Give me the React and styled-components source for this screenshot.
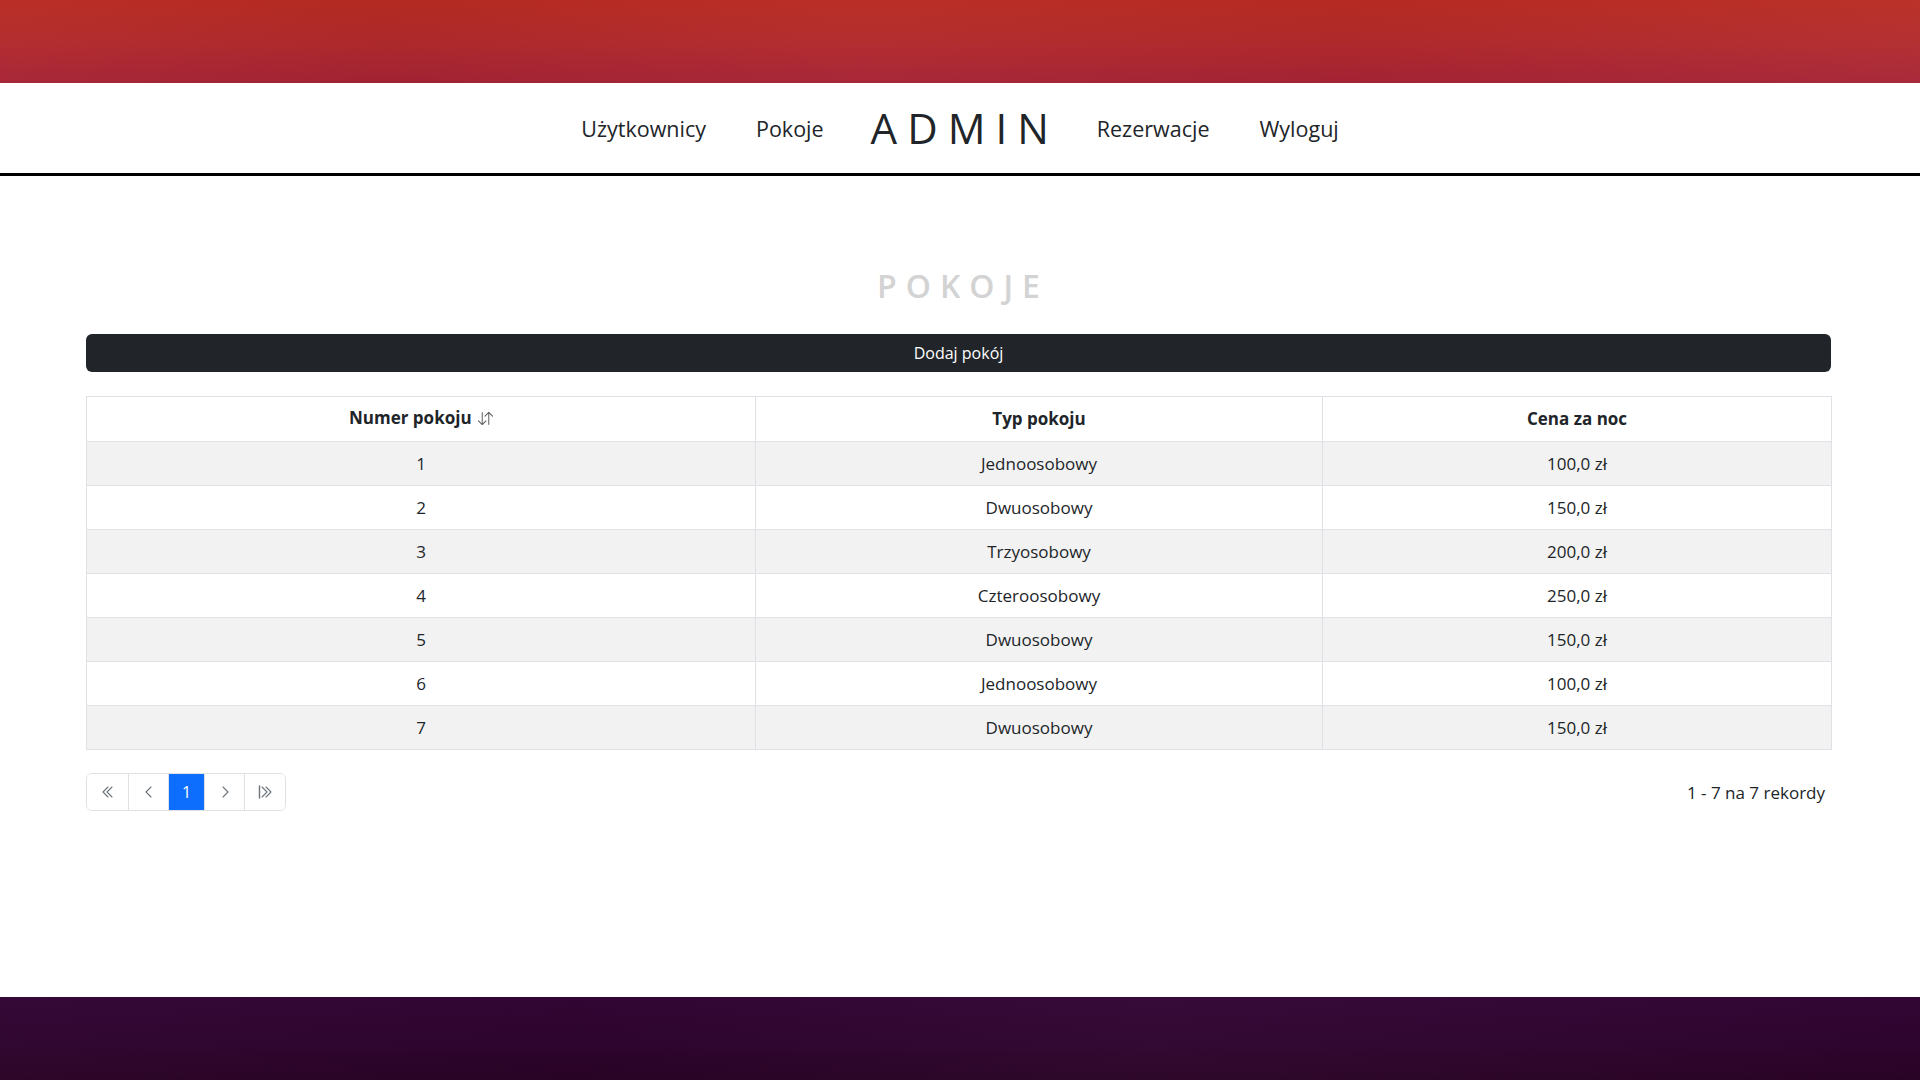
import styled, { createGlobalStyle } from "styled-components";

const GlobalStyle = createGlobalStyle`
    * { box-sizing: border-box; }
    html, body {
        margin: 0;
        padding: 0;
        font-family: "Open Sans", "Noto Sans", sans-serif;
        color: #212529;
        background: #fff;
    }
`;

const rooms = [
    { nr: 1, type: "Jednoosobowy", price: "100,0 zł" },
    { nr: 2, type: "Dwuosobowy", price: "150,0 zł" },
    { nr: 3, type: "Trzyosobowy", price: "200,0 zł" },
    { nr: 4, type: "Czteroosobowy", price: "250,0 zł" },
    { nr: 5, type: "Dwuosobowy", price: "150,0 zł" },
    { nr: 6, type: "Jednoosobowy", price: "100,0 zł" },
    { nr: 7, type: "Dwuosobowy", price: "150,0 zł" },
];

const SortIcon = () => (
    <svg width="15" height="15" viewBox="0 0 16 16" fill="#555">
        <path d="M11.5 15a.5.5 0 0 0 .5-.5V2.707l3.146 3.147a.5.5 0 0 0 .708-.708l-4-4a.5.5 0 0 0-.708 0l-4 4a.5.5 0 1 0 .708.708L11 2.707V14.5a.5.5 0 0 0 .5.5m-7-14a.5.5 0 0 1 .5.5v11.793l3.146-3.147a.5.5 0 0 1 .708.708l-4 4a.5.5 0 0 1-.708 0l-4-4a.5.5 0 0 1 .708-.708L4 13.293V1.5a.5.5 0 0 1 .5-.5" />
    </svg>
);

const PageIcon = ({ kind }) => (
    <svg width="16" height="16" viewBox="0 0 16 16" fill="none" stroke="#6c757d" strokeWidth="1.1" strokeLinecap="round" strokeLinejoin="round">
        {kind === "first" && (
            <>
                <path d="M8 3 3 8l5 5" />
                <path d="M12 3 7 8l5 5" />
            </>
        )}
        {kind === "prev" && <path d="M10 3 5 8l5 5" />}
        {kind === "next" && <path d="M6 3l5 5-5 5" />}
        {kind === "last" && (
            <>
                <path d="M2.5 2v12" strokeWidth="1.4" />
                <path d="M5 3l5 5-5 5" />
                <path d="M9 3l5 5-5 5" />
            </>
        )}
    </svg>
);

const App = () => {
    return (
        <Page>
            <GlobalStyle />
            <TopBand />
            <Nav>
                <NavLink>Użytkownicy</NavLink>
                <NavLink>Pokoje</NavLink>
                <Brand>ADMIN</Brand>
                <NavLink>Rezerwacje</NavLink>
                <NavLink>Wyloguj</NavLink>
            </Nav>

            <Main>
                <Title>POKOJE</Title>
                <AddButton>Dodaj pokój</AddButton>

                <Table>
                    <colgroup>
                        <col style={{ width: 669 }} />
                        <col style={{ width: 567 }} />
                        <col style={{ width: 509 }} />
                    </colgroup>
                    <thead>
                        <tr>
                            <Th>
                                Numer pokoju <SortWrap><SortIcon /></SortWrap>
                            </Th>
                            <Th>Typ pokoju</Th>
                            <Th>Cena za noc</Th>
                        </tr>
                    </thead>
                    <tbody>
                        {rooms.map((r, i) => (
                            <Row key={r.nr} $striped={i % 2 === 0}>
                                <Td>{r.nr}</Td>
                                <Td>{r.type}</Td>
                                <Td>{r.price}</Td>
                            </Row>
                        ))}
                    </tbody>
                </Table>

                <Footerbar>
                    <Pagination>
                        <PageItem $w={41}><PageIcon kind="first" /></PageItem>
                        <PageItem $w={40}><PageIcon kind="prev" /></PageItem>
                        <PageItem $w={36} $active>1</PageItem>
                        <PageItem $w={40}><PageIcon kind="next" /></PageItem>
                        <PageItem $w={41}><PageIcon kind="last" /></PageItem>
                    </Pagination>
                    <Records>1 - 7 na 7 rekordy</Records>
                </Footerbar>
            </Main>

            <BottomBand />
        </Page>
    );
};

export default App;

const Page = styled.div`
    min-height: 100vh;
    display: flex;
    flex-direction: column;
`;

const TopBand = styled.div`
    height: 83px;
    background:
        linear-gradient(90deg, rgba(255,255,255,0.02) 0%, rgba(0,0,0,0.03) 20%, rgba(255,255,255,0.02) 45%, rgba(0,0,0,0.02) 70%, rgba(255,255,255,0.03) 100%),
        linear-gradient(180deg, #b92b22 0%, #b22a2c 50%, #a62336 100%);
`;

const Nav = styled.nav`
    height: 93px;
    border-bottom: 3px solid #000;
    display: flex;
    justify-content: center;
    align-items: center;
`;

const NavLink = styled.a`
    padding: 0 25px;
    font-size: 21.5px;
    font-weight: 500;
    color: #212529;
    cursor: pointer;
`;

const Brand = styled.span`
    padding: 0 13px 0 22px;
    font-size: 42px;
    font-weight: 500;
    letter-spacing: 10px;
    color: #212529;
    line-height: 1;
`;

const Main = styled.main`
    flex: 1;
    padding: 90px 89px 0 86px;
`;

const Title = styled.h2`
    margin: 0 0 28px 0;
    height: 40px;
    line-height: 40px;
    text-align: center;
    font-size: 32px;
    font-weight: 600;
    letter-spacing: 9px;
    padding-left: 9px;
    color: #d3d3d3;
`;

const AddButton = styled.button`
    display: block;
    width: 100%;
    height: 38px;
    border: none;
    border-radius: 6px;
    background: #212529;
    color: #fff;
    font-family: "Open Sans", "Noto Sans", sans-serif;
    font-size: 16px;
    cursor: pointer;
`;

const Table = styled.table`
    width: 100%;
    margin-top: 24px;
    border-collapse: collapse;
    table-layout: fixed;
    font-size: 17px;
`;

const Th = styled.th`
    border: 1px solid #dee2e6;
    padding: 8px;
    line-height: 26px;
    font-weight: 700;
    text-align: center;
    color: #212529;
`;

const SortWrap = styled.span`
    display: inline-block;
    vertical-align: -2px;
    margin-left: 2px;
`;

const Row = styled.tr`
    background: ${(p) => (p.$striped ? "#f2f2f2" : "#fff")};
`;

const Td = styled.td`
    border: 1px solid #dee2e6;
    padding: 8px;
    line-height: 27px;
    text-align: center;
    color: #212529;
`;

const Footerbar = styled.div`
    margin-top: 23px;
    display: flex;
    justify-content: space-between;
    align-items: center;
`;

const Pagination = styled.div`
    display: flex;
    border: 1px solid #dee2e6;
    border-radius: 6px;
    overflow: hidden;
`;

const PageItem = styled.div`
    width: ${(p) => p.$w}px;
    height: 36px;
    display: flex;
    align-items: center;
    justify-content: center;
    font-size: 16px;
    color: ${(p) => (p.$active ? "#fff" : "#6c757d")};
    background: ${(p) => (p.$active ? "#0d6efd" : "#fff")};
    & + & {
        border-left: 1px solid #dee2e6;
    }
`;

const Records = styled.div`
    padding-right: 6px;
    font-size: 17px;
    color: #212529;
`;

const BottomBand = styled.div`
    height: 83px;
    background:
        linear-gradient(90deg, rgba(255,255,255,0.01) 0%, rgba(0,0,0,0.03) 30%, rgba(255,255,255,0.02) 60%, rgba(0,0,0,0.02) 100%),
        linear-gradient(180deg, #330634 0%, #2f0530 50%, #2a0326 100%);
`;
